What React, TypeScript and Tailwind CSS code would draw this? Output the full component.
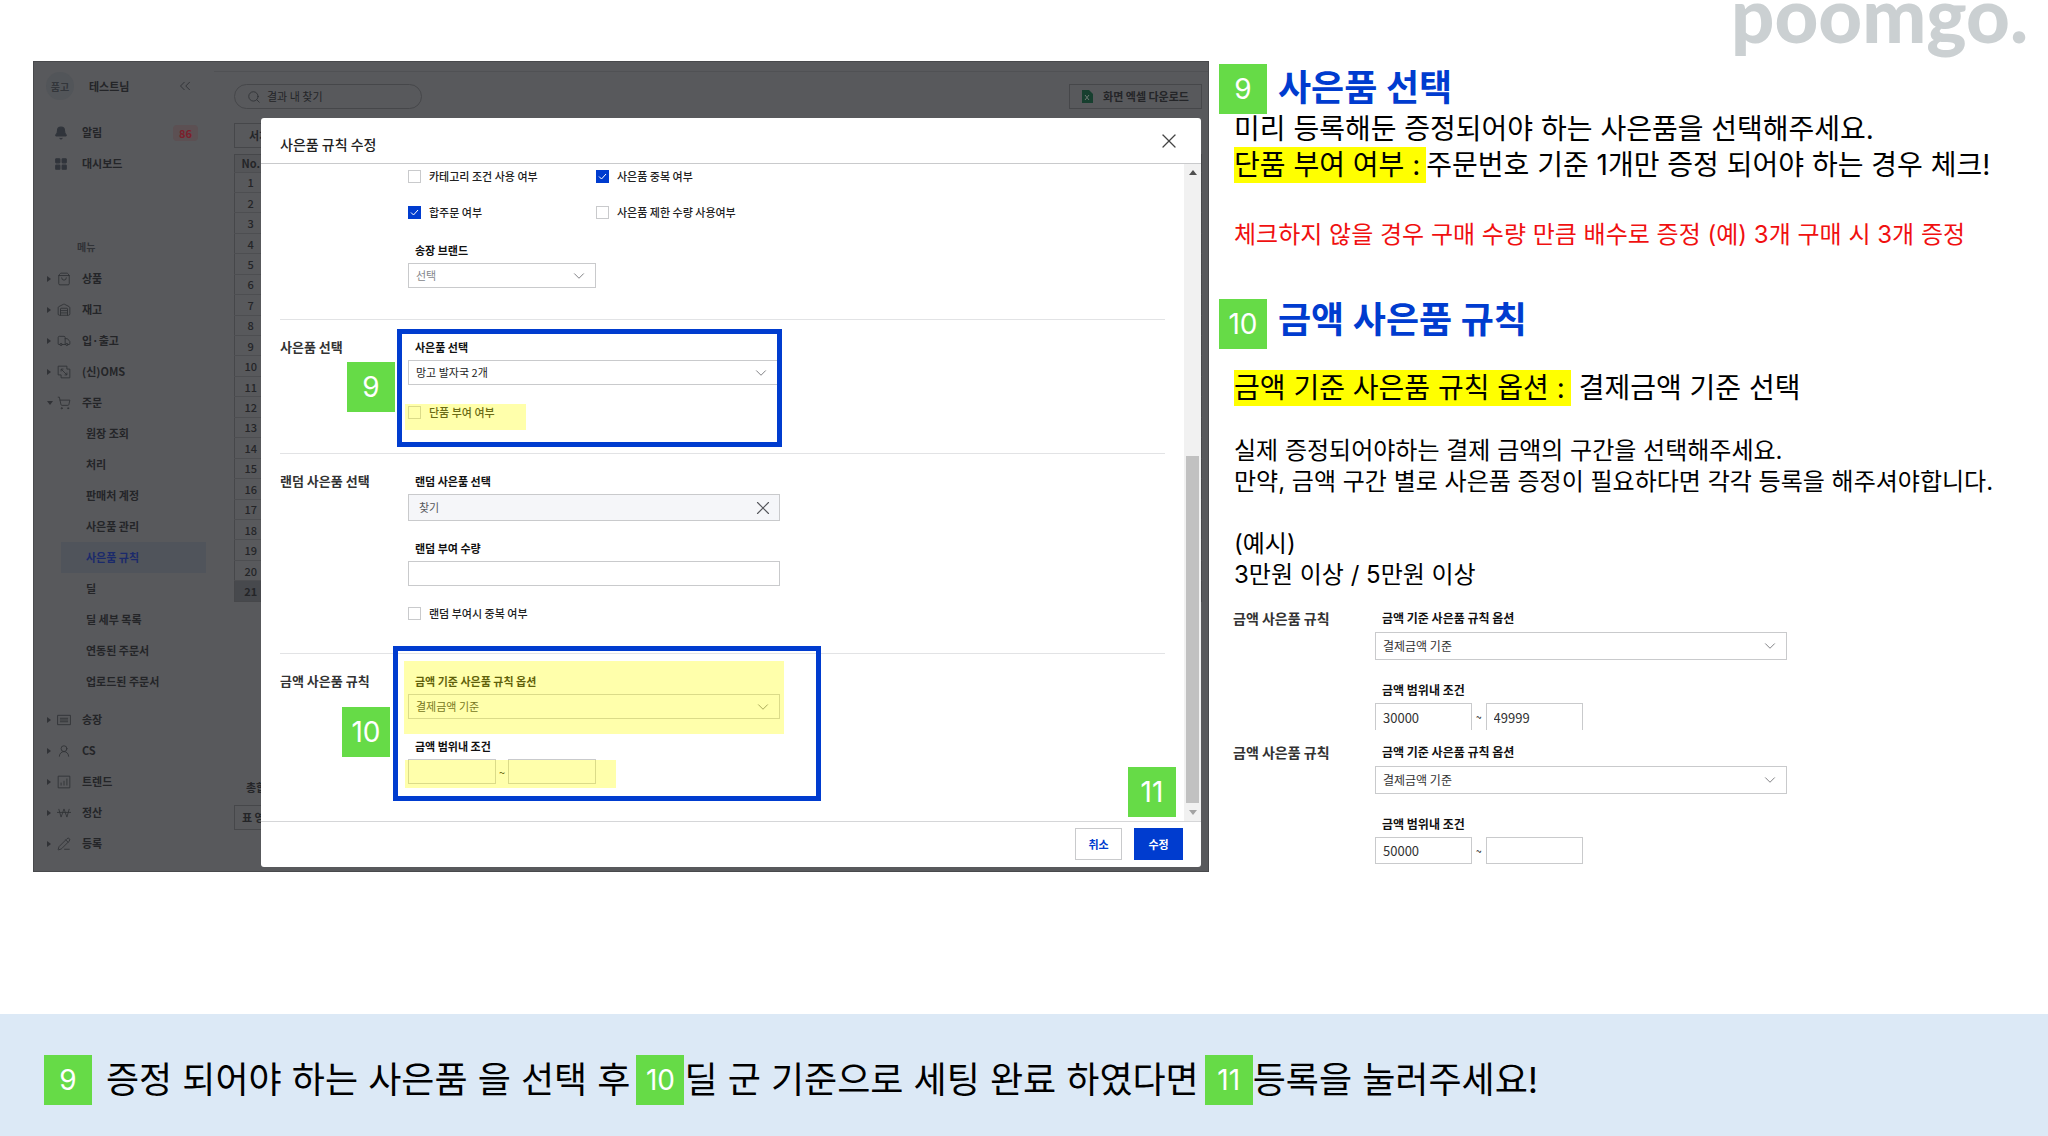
import React from 'react';
import {
  Bell,
  ChevronDown,
  ChevronsLeft,
  LayoutGrid,
  PencilLine,
  Search,
  ShoppingBag,
  ShoppingCart,
  Truck,
  UserRound,
  Warehouse,
  X,
} from 'lucide-react';
import { clsx } from 'clsx';

type IconProps = { className?: string; strokeWidth?: number };

const WonIcon = ({ className, strokeWidth }: IconProps) => (
  <svg viewBox="0 0 24 24" fill="none" stroke="currentColor" strokeWidth={strokeWidth} className={className}>
    <path d="M3 5l4 14 5-14 5 14 4-14M0 11h24" />
  </svg>
);

const OmsIcon = ({ className, strokeWidth }: IconProps) => (
  <svg viewBox="0 0 24 24" fill="none" stroke="currentColor" strokeWidth={strokeWidth} className={className}>
    <path d="M7 17H2V2h15v5M17 7h5v15H7v-5M7 7l10 10M7 11V7h4M17 13v4h-4" />
  </svg>
);

const InvoiceIcon = ({ className, strokeWidth }: IconProps) => (
  <svg viewBox="0 0 24 24" fill="none" stroke="currentColor" strokeWidth={strokeWidth} className={className}>
    <path d="M1 4h22v16H1zM5 9h14M5 12h14M5 15h14" />
  </svg>
);

const TrendIcon = ({ className, strokeWidth }: IconProps) => (
  <svg viewBox="0 0 24 24" fill="none" stroke="currentColor" strokeWidth={strokeWidth} className={className}>
    <path d="M2 2h20v20H2zM7 18v-5M12 18v-8M17 18V6" />
  </svg>
);

const menus = [
  { label: '상품', icon: ShoppingBag },
  { label: '재고', icon: Warehouse },
  { label: '입·출고', icon: Truck },
  { label: '(신)OMS', icon: OmsIcon },
  {
    label: '주문',
    icon: ShoppingCart,
    children: ['원장 조회', '처리', '판매처 계정', '사은품 관리', '사은품 규칙', '딜', '딜 세부 목록', '연동된 주문서', '업로드된 주문서'],
  },
  { label: '송장', icon: InvoiceIcon },
  { label: 'CS', icon: UserRound },
  { label: '트렌드', icon: TrendIcon },
  { label: '정산', icon: WonIcon },
  { label: '등록', icon: PencilLine },
];

const rows = Array.from({ length: 21 }, (_, i) => i + 1);

const Badge = ({ children, className }: { children: React.ReactNode; className?: string }) => (
  <span
    className={clsx(
      "flex h-[50px] w-12 shrink-0 items-center justify-center bg-[#66db47] font-['Inter',sans-serif] text-[28px] leading-none text-white",
      className
    )}
  >
    {children}
  </span>
);

const Highlight = ({ className }: { className?: string }) => (
  <div className={clsx('pointer-events-none absolute bg-[#ffff00]/33', className)} />
);

const Outline = ({ className }: { className?: string }) => (
  <div className={clsx('pointer-events-none absolute border-[5px] border-[#003ccf]', className)} />
);

const FieldLabel = ({ id, children }: { id: string; children: React.ReactNode }) => (
  <label htmlFor={id} className="mb-[5px] block pl-[7px] text-[11px] leading-4 font-bold text-[#111111]">
    {children}
  </label>
);

const Select = ({ id, value, className }: { id: string; value: string; className?: string }) => (
  <div className="relative w-full">
    <select
      id={id}
      className={clsx(
        'block w-full appearance-none rounded-none border border-[#c9cacc] bg-white px-[7px] outline-none',
        className
      )}
    >
      <option>{value}</option>
    </select>
    <ChevronDown strokeWidth={1.25} className="pointer-events-none absolute top-1/2 right-2 size-[18px] -translate-y-1/2 text-[#77797c]" />
  </div>
);

const Check = ({ id, label, checked = false }: { id: string; label: string; checked?: boolean }) => (
  <div className="flex h-4 items-center gap-2">
    <span className="relative size-[13px]">
      <input
        id={id}
        type="checkbox"
        defaultChecked={checked}
        className="peer block size-[13px] appearance-none border border-[#c9cacc] bg-white checked:border-[#003ccf] checked:bg-[#003ccf]"
      />
      <svg viewBox="0 0 13 13" className="pointer-events-none absolute inset-0 hidden fill-none stroke-white peer-checked:block">
        <path d="M3 6.5l2.5 2.5L10 4" />
      </svg>
    </span>
    <label htmlFor={id} className="text-[11px] leading-4 font-medium text-[#222222]">
      {label}
    </label>
  </div>
);

const Section = ({ title, className, children }: { title?: string; className?: string; children: React.ReactNode }) => (
  <section className={clsx('relative grid grid-cols-[128px_1fr]', className)}>
    <h3 className="text-[13px] leading-4 font-bold text-[#333333]">{title}</h3>
    <div>{children}</div>
  </section>
);

const Backdrop = () => (
  <div className="col-start-1 row-start-1 flex overflow-hidden border border-[#48494c] bg-[#58595c] text-[11px] font-bold text-[#242528]">
    {/* Sidebar */}
    <aside className="w-[180px] shrink-0">
      <div className="flex h-12 items-center pl-3">
        <span className="flex size-7 items-center justify-center rounded-full bg-[#525559] text-[10px] text-[#33363b]">품고</span>
        <span className="ml-[15px] flex-1">테스트님</span>
        <button aria-label="접기" className="mr-5">
          <ChevronsLeft strokeWidth={1.25} className="size-[18px] text-[#303236]" />
        </button>
      </div>
      <a href="#" className="mt-[7px] flex h-[31px] items-center pr-4 pl-5">
        <Bell className="size-3.5 fill-[#30343b] text-[#30343b]" />
        <span className="ml-3.5 flex-1">알림</span>
        <span className="rounded-sm bg-[#5c5053] px-1.5 leading-4 text-[#7c1f2c]">86</span>
      </a>
      <a href="#" className="flex h-[31px] items-center pl-5">
        <LayoutGrid className="size-3.5 fill-[#30343b] text-[#30343b]" />
        <span className="ml-3.5">대시보드</span>
      </a>
      <p className="mt-[58px] pl-[43px] text-[10px] leading-5 text-[#303236]">메뉴</p>
      <nav className="mt-1.5">
        {menus.map(({ label, icon: Icon, children }) => (
          <React.Fragment key={label}>
            <a href="#" className="flex h-[31px] items-center pl-[13px]">
              <span
                className={clsx(
                  'border-[#303236]',
                  children
                    ? 'border-x-[3px] border-t-[4px] border-x-transparent'
                    : 'mr-0.5 border-y-[3px] border-l-[4px] border-y-transparent'
                )}
              />
              <Icon strokeWidth={1.5} className="ml-1 size-3.5 text-[#303236]" />
              <span className="ml-[11px]">{label}</span>
            </a>
            {children && (
              <div className="mb-[7px]">
                {children.map((child) => (
                  <a
                    key={child}
                    href="#"
                    className={clsx(
                      'mr-2 ml-[27px] flex h-[31px] items-center pl-[25px]',
                      child === '사은품 규칙' && 'bg-[#50545b] text-[#1b2a6b]'
                    )}
                  >
                    {child}
                  </a>
                ))}
              </div>
            )}
          </React.Fragment>
        ))}
      </nav>
    </aside>

    {/* Grid behind the dialog */}
    <div className="min-w-0 flex-1 pt-[9px]">
      <div className="border-t border-[#505154] pt-3 pr-1.5 pl-5">
        <div className="flex justify-between">
          <label className="flex h-[25px] w-[188px] items-center gap-1.5 rounded-full border border-[#46474a] px-3">
            <Search strokeWidth={1.5} className="size-3.5 shrink-0 text-[#303236]" />
            <input placeholder="결과 내 찾기" className="w-full bg-transparent font-normal outline-none placeholder:text-[#242528]" />
          </label>
          <button className="flex h-[25px] items-center gap-2.5 border border-[#46474a] px-3">
            <svg viewBox="0 0 11 13" className="h-[13px] w-[11px]">
              <path d="M0 0h7l4 4v9H0z" fill="#173f2f" />
              <path d="M3 5l4 5M7 5l-4 5" stroke="#6f7a76" />
            </svg>
            화면 엑셀 다운로드
          </button>
        </div>
        <button className="mt-3.5 block h-[25px] border border-[#46474a] px-3.5">서치</button>
        <table className="mt-1.5 h-[448px] w-full border border-[#46474a]">
          <thead>
            <tr className="bg-[#545558]">
              <th className="w-8">No.</th>
              <th />
            </tr>
          </thead>
          <tbody>
            {rows.map((n) => (
              <tr key={n} className={clsx('border-t border-[#4d4e51]', n === 21 ? 'bg-[#47494d]' : 'font-medium')}>
                <td className="p-0 text-center leading-4">{n}</td>
                <td />
              </tr>
            ))}
          </tbody>
        </table>
        <p className="mt-[177px] pl-3 leading-4">총합</p>
        <button className="mt-2.5 block h-[25px] border border-[#46474a] px-[7px]">표 영역</button>
      </div>
    </div>
  </div>
);

const RuleDialog = () => (
  <div
    role="dialog"
    aria-label="사은품 규칙 수정"
    className="relative col-start-1 row-start-1 mt-[57px] mr-2 mb-[5px] ml-[228px] flex flex-col rounded-[3px] bg-white"
  >
    <div className="flex h-[46px] items-center justify-between border-b border-[#c9cacc] pt-2 pr-5 pl-[19px]">
      <h2 className="text-[14px] font-medium text-[#222222]">사은품 규칙 수정</h2>
      <button aria-label="닫기" className="-mt-2">
        <X strokeWidth={1.25} className="size-6 text-[#444444]" />
      </button>
    </div>

    <div className="flex">
      <div className="flex-1 px-[19px]">
        <Section className="border-b border-[#e2e3e5] pt-1 pb-[31px]">
          <div className="grid grid-cols-[188px_1fr] gap-y-5">
            <Check id="category" label="카테고리 조건 사용 여부" />
            <Check id="duplicate" label="사은품 중복 여부" checked />
            <Check id="merged" label="합주문 여부" checked />
            <Check id="limit" label="사은품 제한 수량 사용여부" />
          </div>
          <div className="mt-[22px] w-[188px]">
            <FieldLabel id="brand">송장 브랜드</FieldLabel>
            <Select id="brand" value="선택" className="h-[25px] text-[11px] text-[#85878c]" />
          </div>
        </Section>

        <Section title="사은품 선택" className="border-b border-[#e2e3e5] pt-[19px] pb-[33px]">
          <div className="w-[370px]">
            <FieldLabel id="gift">사은품 선택</FieldLabel>
            <Select id="gift" value="망고 발자국 2개" className="h-[25px] text-[11px] text-[#222222]" />
          </div>
          <div className="mt-[19px]">
            <Check id="single" label="단품 부여 여부" />
          </div>
          <Highlight className="top-[84px] left-[125px] h-[26px] w-[121px]" />
          <Outline className="top-[9px] left-[117px] h-[118px] w-[385px]" />
          <Badge className="absolute top-[42px] left-[67px]">9</Badge>
        </Section>

        <Section title="랜덤 사은품 선택" className="border-b border-[#e2e3e5] pt-[19px] pb-8">
          <div className="w-[372px]">
            <FieldLabel id="random">랜덤 사은품 선택</FieldLabel>
            <div className="flex h-[27px] items-center border border-[#c9cacc] bg-[#f5f6f9] pr-[5px] pl-2.5">
              <input
                id="random"
                placeholder="찾기"
                className="w-full bg-transparent text-[11px] outline-none placeholder:text-[#55575c]"
              />
              <button aria-label="지우기">
                <X strokeWidth={1.25} className="size-[22px] text-[#55575c]" />
              </button>
            </div>
            <div className="mt-[19px]">
              <FieldLabel id="quantity">랜덤 부여 수량</FieldLabel>
              <input id="quantity" className="block h-[25px] w-full border border-[#c9cacc] px-[7px] text-[11px]" />
            </div>
          </div>
          <div className="mt-[19px]">
            <Check id="randomDuplicate" label="랜덤 부여시 중복 여부" />
          </div>
        </Section>

        <Section title="금액 사은품 규칙" className="pt-[19px] pb-[37px]">
          <div className="w-[372px]">
            <FieldLabel id="option">금액 기준 사은품 규칙 옵션</FieldLabel>
            <Select id="option" value="결제금액 기준" className="h-[25px] text-[11px] text-[#333333]" />
          </div>
          <div className="mt-[19px]">
            <FieldLabel id="min">금액 범위내 조건</FieldLabel>
            <div className="flex items-center gap-[3px] text-[11px] leading-4">
              <input id="min" className="h-[25px] w-[88px] border border-[#c9cacc] px-[7px]" />
              ~
              <input aria-label="최대 금액" className="h-[25px] w-[88px] border border-[#c9cacc] px-[7px]" />
            </div>
          </div>
          <Highlight className="top-[7px] left-[124px] h-[73px] w-[380px]" />
          <Highlight className="top-[106px] left-[125px] h-[28px] w-[211px]" />
          <Outline className="-top-[8px] left-[113px] h-[155px] w-[428px]" />
          <Badge className="absolute top-[53px] left-[62px]">10</Badge>
        </Section>
      </div>

      {/* Scrollbar */}
      <div className="flex w-[17px] flex-col items-center justify-between bg-[#f1f1f1] py-1.5">
        <span className="border-x-[4px] border-b-[5px] border-x-transparent border-b-[#505050]" />
        <span className="mt-auto mb-[7px] h-[347px] w-[13px] bg-[#c1c1c1]" />
        <span className="border-x-[4px] border-t-[5px] border-x-transparent border-t-[#a3a3a3]" />
      </div>
    </div>

    <div className="flex h-[46px] gap-3 border-t border-[#d5d6d8] pt-1.5 pr-[18px] text-[11px] font-bold">
      <button className="ml-auto h-8 w-[47px] border border-[#c9cacc] text-[#003ccf]">취소</button>
      <button className="h-8 w-[49px] bg-[#003ccf] text-white">수정</button>
    </div>
    <Badge className="absolute right-[25px] bottom-[50px]">11</Badge>
  </div>
);

type ExampleProps = { id: string; min: string; max: string; clipped?: boolean };

const Example = ({ id, min, max, clipped = false }: ExampleProps) => {
  const box = clsx('h-[27px] w-[97px] border border-[#c9cacc] px-[7px] text-[13px] text-[#333333]', clipped && 'border-b-0');

  return (
    <div className="grid grid-cols-[142px_1fr]">
      <h3 className="text-[14px] leading-4 font-bold text-[#333333]">금액 사은품 규칙</h3>
      <div className="max-w-[412px]">
        <label htmlFor={`${id}-option`} className="block pl-[7px] text-[12px] leading-4 font-bold text-[#111111]">
          금액 기준 사은품 규칙 옵션
        </label>
        <div className="mt-1.5">
          <Select id={`${id}-option`} value="결제금액 기준" className="h-7 text-[12px] text-[#333333]" />
        </div>
        <label htmlFor={`${id}-min`} className="mt-[22px] block pl-[7px] text-[12px] leading-4 font-bold text-[#111111]">
          금액 범위내 조건
        </label>
        <div className="mt-[5px] flex items-center gap-1 text-[10px] leading-4">
          <input id={`${id}-min`} defaultValue={min} className={box} />
          ~
          <input aria-label="최대 금액" defaultValue={max} className={box} />
        </div>
      </div>
    </div>
  );
};

const Guide = () => (
  <div className="pt-[3px] text-black">
    <div className="flex gap-[11px]">
      <Badge>9</Badge>
      <h2 className="text-[36px] leading-[48px] font-bold text-[#003ccf]">사은품 선택</h2>
    </div>
    <div className="-mt-[3px] pl-[15px] text-[28px] leading-9">
      <p>미리 등록해둔 증정되어야 하는 사은품을 선택해주세요.</p>
      <p>
        <mark className="inline-block bg-[#ffff00] pr-1.5">단품 부여 여부 :</mark>주문번호 기준 1개만 증정 되어야 하는 경우 체크!
      </p>
    </div>
    <p className="mt-[34px] pl-[15px] text-[24px] leading-9 text-[#f01010]">
      체크하지 않을 경우 구매 수량 만큼 배수로 증정 (예) 3개 구매 시 3개 증정
    </p>

    <div className="mt-[46px] flex gap-[11px]">
      <Badge>10</Badge>
      <h2 className="text-[36px] leading-[42px] font-bold text-[#003ccf]">금액 사은품 규칙</h2>
    </div>
    <p className="mt-[21px] pl-[15px] text-[28px] leading-9">
      <mark className="inline-block bg-[#ffff00] pr-1.5">금액 기준 사은품 규칙 옵션 :</mark> 결제금액 기준 선택
    </p>
    <div className="mt-[29px] pl-[15px] text-[24px] leading-[31px]">
      <p>실제 증정되어야하는 결제 금액의 구간을 선택해주세요.</p>
      <p>만약, 금액 구간 별로 사은품 증정이 필요하다면 각각 등록을 해주셔야합니다.</p>
      <p className="mt-[31px]">(예시)</p>
      <p>3만원 이상 / 5만원 이상</p>
    </div>
    <div className="mt-5 flex flex-col gap-3.5 pl-3.5 font-['Noto_Sans_CJK_KR',sans-serif]">
      <Example id="from30000" min="30000" max="49999" clipped />
      <Example id="from50000" min="50000" max="" />
    </div>
  </div>
);

const App = () => {
  return (
    <div className="flex min-h-screen flex-col overflow-hidden bg-white font-['Inter','Noto_Sans_CJK_KR',sans-serif]">
      <header className="flex h-[61px] justify-end pr-5">
        <span className="font-['Lato',sans-serif] text-[76px] leading-[28px] font-black text-[#cbd0d2]">poomgo.</span>
      </header>

      <main className="grid grid-cols-[1176fr_829fr] items-start gap-2.5 pl-[33px]">
        <div className="grid font-['Noto_Sans_CJK_KR',sans-serif]">
          <Backdrop />
          <RuleDialog />
        </div>
        <Guide />
      </main>

      <footer className="mt-auto flex h-[122px] items-center bg-[#dce9f6] pt-2.5 pl-11 text-[36px] leading-[50px] text-black">
        <Badge>9</Badge>
        <span className="ml-3.5">증정 되어야 하는 사은품 을 선택 후</span>
        <Badge className="ml-1.5">10</Badge>
        <span>딜 군 기준으로 세팅 완료 하였다면</span>
        <Badge className="ml-1.5">11</Badge>
        <span>등록을 눌러주세요!</span>
      </footer>
    </div>
  );
};

export default App;
